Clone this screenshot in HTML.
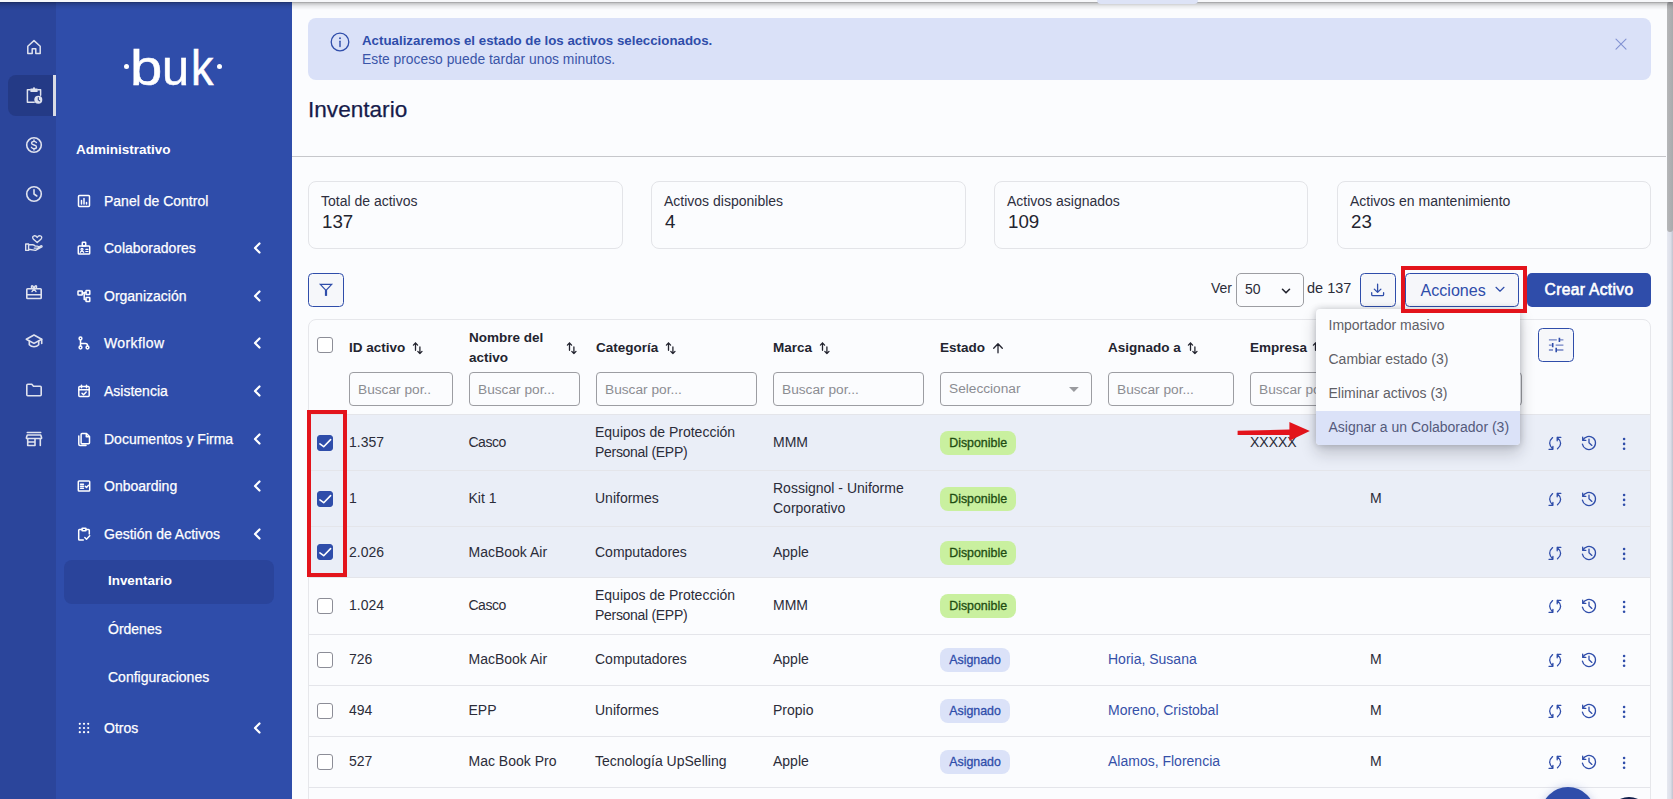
<!DOCTYPE html>
<html lang="es">
<head>
<meta charset="utf-8">
<title>Inventario</title>
<style>
*{box-sizing:border-box;margin:0;padding:0}
html,body{width:1673px;height:799px;overflow:hidden;background:#fbfcfe;font-family:"Liberation Sans",sans-serif;color:#2e2f3e;font-size:14px}
#app{position:relative;width:1673px;height:799px;overflow:hidden;background:#fbfcfe}
#app div,#app span{position:absolute;white-space:nowrap}
#rail{left:0;top:0;width:56px;height:799px;background:#2b459b}
#side{left:56px;top:0;width:236px;height:799px;background:#2f4daa}
#topline{left:0;top:0;width:1673px;height:11px;background:linear-gradient(#f7f8fa 0,#f7f8fa 1.800px,rgba(0,0,0,.36) 2.200px,rgba(0,0,0,.2) 3.500px,rgba(0,0,0,.08) 6px,rgba(0,0,0,0) 10px);z-index:50}
#toptab{left:1096.500px;top:0;width:101.500px;height:3.800px;background:#dde3f6;border-radius:0 0 5px 5px;z-index:51}
.railact{left:8px;top:75px;width:48px;height:41px;background:#243a86;border-radius:8px 0 0 8px}
.railbar{left:53px;top:75px;width:3px;height:41px;background:#d9dce6}
.ri{left:24px;width:20px;height:20px}
.ri svg{display:block;width:20px;height:20px;fill:none;stroke:#dfe2ee;stroke-width:1.6;stroke-linecap:round;stroke-linejoin:round}
.logo{left:56px;top:30px;width:236px;height:70px;color:#fff}
.logo .lt{top:2.500px;font-size:50.500px;line-height:70px;-webkit-text-stroke:0.500px #fff}
.logo .lt b{display:inline-block;font-weight:400;transform-origin:0 50%}
.logo .dot{top:33.600px;width:5.600px;height:5.600px;border-radius:50%;background:#fff}
.sect{left:76px;top:142px;color:#fff;font-weight:700;font-size:13.5px;line-height:16px}
.mi{left:104px;color:#fff;font-size:14px;line-height:18px;-webkit-text-stroke:0.250px #fff}
.mic{left:76px;width:16px;height:16px}
.mic svg{display:block;width:16px;height:16px;fill:none;stroke:#fff;stroke-width:1.5;stroke-linecap:round;stroke-linejoin:round}
.chev{left:252px;width:10px;height:14px}
.chev svg{display:block;width:10px;height:14px;fill:none;stroke:#fff;stroke-width:2.2;stroke-linecap:round;stroke-linejoin:round}
.subact{left:64px;top:560px;width:210px;height:44px;background:#2a449b;border-radius:8px}
.smi{left:108px;color:#fff;font-size:14px;line-height:18px;-webkit-text-stroke:0.250px #fff}
/* main */
.alert{left:308px;top:18px;width:1343px;height:62px;background:#dae1f8;border-radius:8px}
.alert .t1{left:54px;top:14px;font-size:13.3px;line-height:18px;font-weight:700;color:#2f4daa}
.alert .t2{left:54px;top:32px;font-size:13.85px;line-height:18px;color:#3a55a8}
h1.title{position:absolute;left:308px;-webkit-text-stroke:0.250px #171c4b;top:97px;font-size:22.6px;line-height:26px;font-weight:400;color:#171c4b;white-space:nowrap}
.hr{left:292px;top:156px;width:1374px;height:1px;background:#c6c7cb}
.card{top:181px;width:315px;height:68px;border:1px solid #e3e4e8;border-radius:8px;background:#fbfcfe}
.card .l{left:12px;top:10px;font-size:14px;line-height:18px;color:#2e2f3e}
.card .v{left:13px;top:29px;font-size:18.7px;line-height:22px;color:#23242f}
.btn{border:1px solid #2f4daa;border-radius:4.500px;background:#f6f7fa;color:#2f4daa}
.sel{border:1px solid #9c9da2;border-radius:5px;background:#fbfcfe}
.tbl{left:308px;top:319px;width:1343px;height:520px;border:1px solid #e6e7eb;border-radius:8px;background:#fbfcfe}
.th{font-weight:700;font-size:13.5px;line-height:20px;margin-top:1px;color:#23242f}
.inp{height:34px;top:372px;border:1px solid #9c9da2;border-radius:4px;background:#fbfcfe;color:#8b8c92;font-size:14px;line-height:33px;padding-left:8px;font-size:13.7px;overflow:hidden}
.row{left:309px;width:1341px;border-top:1px solid #e4e5ea}
.row.selr{background:#eaeef7}
.c{font-size:14px;line-height:20px;color:#2b2c39}
.c.wrap{white-space:normal!important}
.lnk{color:#3550a8}
.cb{left:317px;width:16px;height:16px;border:1px solid #8c8d97;border-radius:3px;background:#fff}
.cb.on{background:#2f4daa;border-color:#2f4daa}
.cb svg{display:block;position:absolute;left:-1px;top:-1px;width:16px;height:16px;fill:none;stroke:#fff;stroke-width:1.6;stroke-linecap:round;stroke-linejoin:round}
.badge{height:24px;border-radius:8px;font-size:12.4px;line-height:24px;padding:0 9.200px;font-weight:400;-webkit-text-stroke:0.300px currentColor}
.badge.g{background:#c9f09f;color:#1f4d12}
.badge.b{background:#dbe2f8;color:#2f4daa}
.ai{width:18px;height:18px}
.ai svg{display:block;width:18px;height:18px;fill:none;stroke:#2f4daa;stroke-width:1.300;stroke-linecap:round;stroke-linejoin:round}
.menu{left:1316px;top:309px;width:204px;height:136.300px;background:#fbfcfe;border-radius:4px;box-shadow:0 8px 16px rgba(20,22,35,.2),0 0 7px rgba(20,22,35,.22);z-index:20}
.menu .it{left:0;width:204px;height:34px;padding-left:12.500px;font-size:14px;line-height:33px;color:#5f6067}
.menu .it.hl{background:#dbe2f8;color:#545a7c;border-radius:0 0 4px 4px}
.redbox{border:4px solid #e3141c;z-index:30}
.sb{left:1667px;top:0;width:6px;height:799px;background:linear-gradient(90deg,#e6e8f0 0%,#dcdfe9 60%,#c0c3ce 100%);z-index:40}
.sbt{left:1667px;top:2px;width:6px;height:229.500px;background:linear-gradient(90deg,#b6b7b9,#a9aaac);border-radius:3px;z-index:41}
</style>
</head>
<body>
<div id="app">

  <div id="rail"></div>
  <div id="side"></div>
  <div class="railact"></div><div class="railbar"></div>
  <div class="ri" style="top:37px"><svg viewBox="0 0 20 20"><path d="M3.800 9.200 10 3.600l6.200 5.600V16.400h-4.400v-4.700H8.200v4.700H3.800z" stroke-width="1.500"/></svg></div>
<div class="ri" style="top:86px"><svg viewBox="0 0 20 20"><path d="M6.200 3.800H3.400V16.200H10.200M13.800 3.800H16.600V9.300" stroke-width="1.500"/><rect x="6.300" y="2.500" width="7.400" height="3.400" rx="0.600" fill="#dfe2ee" stroke="none"/><circle cx="10" cy="2.300" r="1.100" fill="#dfe2ee" stroke="none"/><circle cx="14.300" cy="13.700" r="4" fill="#dfe2ee" stroke="none"/><path d="M14.300 11.600v2.300l1.400 1" stroke="#243a86" stroke-width="1.100"/></svg></div>
<div class="ri" style="top:135px"><svg viewBox="0 0 20 20"><circle cx="10" cy="10" r="7.3"/><path d="M12.4 7.6c-.4-.8-1.3-1.2-2.4-1.2-1.4 0-2.4.7-2.4 1.8 0 2.5 4.9 1.1 4.9 3.7 0 1.100-1.1 1.800-2.500 1.800-1.200 0-2.200-.5-2.600-1.400M10 5v1.400M10 13.700V15" stroke-width="1.4"/></svg></div>
<div class="ri" style="top:184px"><svg viewBox="0 0 20 20"><circle cx="10" cy="10" r="7.3"/><path d="M10 5.800V10l2.800 2"/></svg></div>
<div class="ri" style="top:233px"><svg viewBox="0 0 20 20"><path d="M13.200 9.600 9.500 6.200C8.200 4.900 8.500 3.200 9.900 2.900 11.100 2.600 12.400 3.100 13.200 4.500 14 3.100 15.300 2.600 16.500 2.900 17.900 3.200 18.200 4.900 16.900 6.200z" stroke-width="1.400"/><path d="M1.700 11h2.900v6.400H1.700zM4.600 11.800H8.600c.8 0 1.500.3 2 .8l.5.500h2.300c.7 0 1.100.4 1.100 1s-.4 1-1.100 1H10.200M14.400 14.300l2.500-1.500c.8-.4 1.500.5.900 1.200L11.500 17.400 4.600 16.200" stroke-width="1.400"/></svg></div>
<div class="ri" style="top:282px"><svg viewBox="0 0 20 20"><rect x="2.800" y="6.800" width="14.400" height="9.700" rx="0.800"/><path d="M2.800 12.800h14.400M10 6.700C8.300 6.700 6.900 5.400 7.500 4.200 8.100 3.100 9.600 4.300 10 6.700 10.400 4.300 11.900 3.100 12.500 4.200 13.100 5.400 11.700 6.700 10 6.700zM10 6.900 8 9.600M10 6.900l2 2.700" stroke-width="1.400"/></svg></div>
<div class="ri" style="top:331px"><svg viewBox="0 0 20 20"><path d="M10 4 2.300 8.200 10 12.400l7.700-4.200z"/><path d="M5.300 10v3.700c1.200 1.300 2.900 2 4.700 2s3.500-.7 4.700-2V10M17.700 8.200v4.300"/></svg></div>
<div class="ri" style="top:380px"><svg viewBox="0 0 20 20"><path d="M2.800 5.300c0-.6.400-1 1-1h4l1.700 1.900h6.700c.6 0 1 .4 1 1v7.500c0 .6-.4 1-1 1H3.800c-.6 0-1-.4-1-1z"/></svg></div>
<div class="ri" style="top:429px"><svg viewBox="0 0 20 20"><path d="M3.300 3.500h13.400M2.500 8.300l.8-2.300h13.400l.8 2.300v1.200h-15zM3.700 9.500V16.500h7.300V9.500M11 13H3.700M16.300 9.500v7" /></svg></div>
  <div class="logo"><div class="dot" style="left:67.700px"></div><div class="lt" style="left:73.770px"><b style="transform:scaleX(1.150)">b</b><b style="transform:scaleX(0.966);margin-left:4.530px">u</b><b style="transform:scaleX(0.890);margin-left:0.800px">k</b></div><div class="dot" style="left:160.700px"></div></div>
  <div class="sect">Administrativo</div>
  <div class="mic" style="top:193px"><svg viewBox="0 0 16 16"><rect x="2.500" y="2.500" width="11" height="11" rx="1"/><path d="M5.500 11V7.500M8 11V5.500M10.500 11V9.500" stroke-width="1.500"/></svg></div>
<div class="mi" style="top:192px">Panel de Control</div>
<div class="mic" style="top:240px"><svg viewBox="0 0 16 16"><rect x="2.300" y="6" width="11.400" height="8" rx="0.800"/><rect x="6.300" y="2.300" width="3.400" height="3.700" rx="0.500"/><circle cx="6" cy="9.300" r="1" stroke-width="1.200"/><path d="M4.300 12.300c.3-.8 1-1.200 1.700-1.200s1.400.4 1.700 1.200M9.800 9.300h2.200M9.800 11.500h2.200" stroke-width="1.200"/></svg></div>
<div class="mi" style="top:239px">Colaboradores</div>
<div class="chev" style="top:241px"><svg viewBox="0 0 10 14"><path d="M7.500 2.500 3 7l4.500 4.500"/></svg></div>
<div class="mic" style="top:288px"><svg viewBox="0 0 16 16"><rect x="2" y="3" width="4.300" height="4" rx="0.500"/><rect x="10" y="2.600" width="3.800" height="3.800" rx="0.500"/><rect x="10" y="9.600" width="3.800" height="3.800" rx="0.500"/><path d="M6.300 5h1.900M8.200 4.500h1.800M8.200 4.500v7h1.800"/></svg></div>
<div class="mi" style="top:287px">Organización</div>
<div class="chev" style="top:289px"><svg viewBox="0 0 10 14"><path d="M7.500 2.500 3 7l4.500 4.500"/></svg></div>
<div class="mic" style="top:335px"><svg viewBox="0 0 16 16"><circle cx="4.500" cy="3.500" r="1.400"/><circle cx="4.500" cy="12.500" r="1.400"/><circle cx="11.500" cy="12.500" r="1.400"/><path d="M4.500 5v6M4.500 8.500h5c1.100 0 2 .9 2 2v.5"/></svg></div>
<div class="mi" style="top:334px;letter-spacing:0.400px">Workflow</div>
<div class="chev" style="top:336px"><svg viewBox="0 0 10 14"><path d="M7.500 2.500 3 7l4.500 4.500"/></svg></div>
<div class="mic" style="top:383px"><svg viewBox="0 0 16 16"><rect x="2.800" y="3.600" width="10.400" height="10" rx="1"/><path d="M2.800 6.700h10.400M5.500 2.300v2.400M10.500 2.300v2.400M6 10.300l1.500 1.500 2.700-2.800"/></svg></div>
<div class="mi" style="top:382px">Asistencia</div>
<div class="chev" style="top:384px"><svg viewBox="0 0 10 14"><path d="M7.500 2.500 3 7l4.500 4.500"/></svg></div>
<div class="mic" style="top:431px"><svg viewBox="0 0 16 16"><path d="M6 2.500h4.500l3 3v6.300c0 .5-.4.900-.9.900H6c-.5 0-.9-.4-.9-.9V3.400c0-.5.400-.9.900-.9zM10.300 2.700v3h3M2.800 5v8.300c0 .7.500 1.200 1.200 1.200h6"/></svg></div>
<div class="mi" style="top:430px">Documentos y Firma</div>
<div class="chev" style="top:432px"><svg viewBox="0 0 10 14"><path d="M7.500 2.500 3 7l4.500 4.500"/></svg></div>
<div class="mic" style="top:478px"><svg viewBox="0 0 16 16"><rect x="2.300" y="3" width="11.400" height="10" rx="0.800"/><path d="M4.500 6.300h3M4.500 8.300h3M4.500 10.300h3M9.300 8.300l1.200 1.200 2-2.300" stroke-width="1.400"/></svg></div>
<div class="mi" style="top:477px">Onboarding</div>
<div class="chev" style="top:479px"><svg viewBox="0 0 10 14"><path d="M7.500 2.500 3 7l4.500 4.500"/></svg></div>
<div class="mic" style="top:526px"><svg viewBox="0 0 16 16"><path d="M6 3.500H3.500c-.5 0-.8.300-.8.800v8.900c0 .5.300.8.800.8h3.800M10 3.500h2.500c.5 0 .8.300.8.800V8"/><rect x="6" y="2.300" width="4" height="2.400" rx="0.500"/><path d="M8.800 11.500l1.700 1.700 3.200-3.500"/></svg></div>
<div class="mi" style="top:525px">Gestión de Activos</div>
<div class="chev" style="top:527px"><svg viewBox="0 0 10 14"><path d="M7.500 2.500 3 7l4.500 4.500"/></svg></div>
<div class="mic" style="top:720px"><svg viewBox="0 0 16 16"><circle cx="3.8" cy="3.8" r="1.100" fill="#fff" stroke="none"/><circle cx="3.8" cy="8" r="1.100" fill="#fff" stroke="none"/><circle cx="3.8" cy="12.2" r="1.100" fill="#fff" stroke="none"/><circle cx="8" cy="3.8" r="1.100" fill="#fff" stroke="none"/><circle cx="8" cy="8" r="1.100" fill="#fff" stroke="none"/><circle cx="8" cy="12.2" r="1.100" fill="#fff" stroke="none"/><circle cx="12.2" cy="3.8" r="1.100" fill="#fff" stroke="none"/><circle cx="12.2" cy="8" r="1.100" fill="#fff" stroke="none"/><circle cx="12.2" cy="12.2" r="1.100" fill="#fff" stroke="none"/></svg></div>
<div class="mi" style="top:719px">Otros</div>
<div class="chev" style="top:721px"><svg viewBox="0 0 10 14"><path d="M7.500 2.500 3 7l4.500 4.500"/></svg></div>
<div class="subact"></div>
<div class="smi" style="top:572px;font-weight:700;font-size:13.400px;-webkit-text-stroke:0">Inventario</div>
<div class="smi" style="top:620px">Órdenes</div>
<div class="smi" style="top:668px">Configuraciones</div>

<div class="alert"><div style="left:22px;top:13.800px;width:20px;height:20px"><svg viewBox="0 0 20 20" style="display:block;width:20px;height:20px;fill:none;stroke:#2f4daa;stroke-width:1.300;stroke-linecap:round"><circle cx="10" cy="10" r="8.800"/><path d="M10 9.300v5.200" stroke-width="1.400"/><circle cx="10" cy="6.200" r="0.950" fill="#2f4daa" stroke="none"/></svg></div><div class="t1">Actualizaremos el estado de los activos seleccionados.</div><div class="t2">Este proceso puede tardar unos minutos.</div><div style="left:1307px;top:20px;width:12px;height:12px"><svg viewBox="0 0 12 12" style="display:block;width:12px;height:12px;fill:none;stroke:#8292d2;stroke-width:1.100;stroke-linecap:round"><path d="M1 1.100l10 10M11 1.100 1 11.100"/></svg></div></div>
<h1 class="title">Inventario</h1>
<div class="hr"></div>
<div class="card" style="left:308px;width:315px"><div class="l">Total de activos</div><div class="v">137</div></div>
<div class="card" style="left:651px;width:315px"><div class="l">Activos disponibles</div><div class="v">4</div></div>
<div class="card" style="left:994px;width:314px"><div class="l">Activos asignados</div><div class="v">109</div></div>
<div class="card" style="left:1337px;width:314px"><div class="l">Activos en mantenimiento</div><div class="v">23</div></div>
<div class="btn" style="left:308px;top:273px;width:36px;height:34px"><svg viewBox="0 0 36 34" style="position:absolute;left:-1px;top:-1px;width:36px;height:34px;fill:none;stroke:#2f4daa;stroke-width:1.200;stroke-linejoin:miter"><path d="M12.300 11.300H23.700L18 17.400z"/><path d="M18 17V22.900" stroke-width="2.200"/></svg></div>
<div class="c" style="left:1211px;top:278px">Ver</div>
<div class="sel" style="left:1236px;top:273px;width:68px;height:34px"><div class="c" style="left:8px;top:5px">50</div><svg viewBox="0 0 10 10" style="position:absolute;left:44px;top:12px;width:10px;height:10px;fill:none;stroke:#23242f;stroke-width:1.600;stroke-linecap:round;stroke-linejoin:round"><path d="M1.500 3.300 5 6.800l3.500-3.500"/></svg></div>
<div class="c" style="left:1307px;top:278px;font-size:14.500px">de 137</div>
<div class="btn" style="left:1360px;top:273px;width:36px;height:34px"><svg viewBox="0 0 36 34" style="position:absolute;left:-1px;top:-1px;width:36px;height:34px;fill:none;stroke:#2f4daa;stroke-width:1.300;stroke-linejoin:round;stroke-linecap:round"><path d="M17.600 11.200V19.300M14.300 16.100 17.600 19.400 20.900 16.100M11.700 19.700V21.400Q11.700 22.600 12.900 22.600H22.400Q23.600 22.600 23.600 21.400V19.700"/></svg></div>
<div class="btn" style="left:1404.500px;top:273px;width:114.500px;height:34px"><div style="left:15px;top:6px;font-size:16.100px;line-height:20px;color:#2f4daa">Acciones</div><svg viewBox="0 0 10 10" style="position:absolute;left:89px;top:10px;width:10px;height:10px;fill:none;stroke:#2f4daa;stroke-width:1.200;stroke-linecap:round;stroke-linejoin:round"><path d="M1 3.300 5 7.200l4-3.900"/></svg></div>
<div style="left:1527px;top:273px;width:124px;height:34px;background:#2f4daa;border-radius:5px;color:#fff;font-weight:400;font-size:15.600px;letter-spacing:0.320px;-webkit-text-stroke:0.600px #fff;line-height:34px;text-align:center">Crear Activo</div>
<div class="redbox" style="left:1400.500px;top:266px;width:126.500px;height:46.500px"></div>
<div class="tbl"></div>
<div class="cb" style="top:337px"></div>
<div class="th" style="left:349px;top:337px" id="th349">ID activo<span style="position:relative;display:inline-block;vertical-align:-3px;margin-left:6.5px"><svg viewBox="0 0 12 14" style="display:block;width:12px;height:14px;fill:none;stroke:#23242f;stroke-width:1.300;stroke-linecap:round;stroke-linejoin:round"><path d="M3.500 9.300V1.900M1.400 4.100 3.500 1.900l2.100 2.200M7.900 5.900V12.600M5.800 10.400l2.100 2.200 2.100-2.200"/></svg></span></div>
<div class="th" style="left:469px;top:327px" id="th469">Nombre del<br>activo</div>
<div style="left:566px;top:341px"><svg viewBox="0 0 12 14" style="display:block;width:12px;height:14px;fill:none;stroke:#23242f;stroke-width:1.300;stroke-linecap:round;stroke-linejoin:round"><path d="M3.500 9.300V1.900M1.400 4.100 3.500 1.900l2.100 2.200M7.900 5.900V12.600M5.800 10.400l2.100 2.200 2.100-2.200"/></svg></div>
<div class="th" style="left:596px;top:337px" id="th596">Categoría<span style="position:relative;display:inline-block;vertical-align:-3px;margin-left:6.5px"><svg viewBox="0 0 12 14" style="display:block;width:12px;height:14px;fill:none;stroke:#23242f;stroke-width:1.300;stroke-linecap:round;stroke-linejoin:round"><path d="M3.500 9.300V1.900M1.400 4.100 3.500 1.900l2.100 2.200M7.900 5.900V12.600M5.800 10.400l2.100 2.200 2.100-2.200"/></svg></span></div>
<div class="th" style="left:773px;top:337px" id="th773">Marca<span style="position:relative;display:inline-block;vertical-align:-3px;margin-left:6.5px"><svg viewBox="0 0 12 14" style="display:block;width:12px;height:14px;fill:none;stroke:#23242f;stroke-width:1.300;stroke-linecap:round;stroke-linejoin:round"><path d="M3.500 9.300V1.900M1.400 4.100 3.500 1.900l2.100 2.200M7.900 5.900V12.600M5.800 10.400l2.100 2.200 2.100-2.200"/></svg></span></div>
<div class="th" style="left:940px;top:337px" id="th940">Estado<span style="position:relative;display:inline-block;vertical-align:-3px;margin-left:6.5px"><svg viewBox="0 0 12 14" style="display:block;width:12px;height:14px;fill:none;stroke:#23242f;stroke-width:1.300;stroke-linecap:round;stroke-linejoin:round"><path d="M6 11.800V2.800M1.700 7.300 6 2.800l4.300 4.500"/></svg></span></div>
<div class="th" style="left:1108px;top:337px" id="th1108">Asignado a<span style="position:relative;display:inline-block;vertical-align:-3px;margin-left:6.5px"><svg viewBox="0 0 12 14" style="display:block;width:12px;height:14px;fill:none;stroke:#23242f;stroke-width:1.300;stroke-linecap:round;stroke-linejoin:round"><path d="M3.500 9.300V1.900M1.400 4.100 3.500 1.900l2.100 2.200M7.900 5.900V12.600M5.800 10.400l2.100 2.200 2.100-2.200"/></svg></span></div>
<div class="th" style="left:1250px;top:337px" id="th1250">Empresa<span style="position:relative;display:inline-block;vertical-align:-3px;margin-left:4.5px"><svg viewBox="0 0 12 14" style="display:block;width:12px;height:14px;fill:none;stroke:#23242f;stroke-width:1.300;stroke-linecap:round;stroke-linejoin:round"><path d="M3.500 9.300V1.900M1.400 4.100 3.500 1.900l2.100 2.200M7.900 5.900V12.600M5.800 10.400l2.100 2.200 2.100-2.200"/></svg></span></div>
<div class="inp" style="left:349px;width:104px">Buscar por..</div>
<div class="inp" style="left:469px;width:111px">Buscar por...</div>
<div class="inp" style="left:596px;width:161px">Buscar por...</div>
<div class="inp" style="left:773px;width:151px">Buscar por...</div>
<div class="inp" style="left:1108px;width:126px">Buscar por...</div>
<div class="inp" style="left:1250px;width:272px">Buscar por...</div>
<div class="inp" style="left:940px;width:152px;line-height:31px">Seleccionar<svg viewBox="0 0 10 6" style="position:absolute;left:128px;top:14px;width:10px;height:6px;fill:#9a9b9f"><path d="M0 0h9.800L4.900 4.900z"/></svg></div>
<div class="btn" style="left:1538px;top:328px;width:36px;height:34px;background:#f6f7fa"><svg viewBox="0 0 16 16" style="position:absolute;left:9px;top:8px;width:16px;height:16px;fill:none;stroke-width:1.400;stroke-linecap:butt"><path stroke="#7283c4" d="M0.900 2.900H8.800M11.400 2.900H15.400M0.900 8.100H3.700M7.700 8.100H15.400M0.900 13H5M8.200 13H15.400"/><path stroke="#2f4daa" stroke-width="1.600" d="M11.400 0.700V5.100M4.700 5.900V10.300M8.200 10.800V15.200"/></svg></div>
<div class="row selr" style="top:414px;height:56px"></div>
<div class="cb on" style="top:435px"><svg viewBox="0 0 16 16"><path d="M2.900 8.900 6.700 11.700 13.600 4.600"/></svg></div>
<div class="c" style="left:349px;top:432px">1.357</div>
<div class="c" style="left:468.5px;top:432px"><span style="position:static;letter-spacing:-0.500px">Casco</span></div>
<div class="c" style="left:595px;top:422px">Equipos de Protección<br><span style="position:static;letter-spacing:-0.300px">Personal (EPP)</span></div>
<div class="c" style="left:773px;top:432px">MMM</div>
<div class="badge g" style="left:940px;top:431px">Disponible</div>
<div class="c" style="left:1250px;top:432px">XXXXX</div>
<div class="ai" style="left:1546px;top:434.0px"><svg viewBox="0 0 18 18"><path d="M6.600 3.600Q0.600 9.200 6.900 15.300M3 15.300H6.900V12.300M11.500 14.800Q17.900 9.200 11.200 3.400M14.800 3.400H11.200V6.800"/></svg></div>
<div class="ai" style="left:1580px;top:434.0px"><svg viewBox="0 0 18 18"><path d="M2.400 10.200A6.600 6.600 0 1 0 2.800 6.400M2.700 3.100V6.400H5.800M9 5.100V8.800L11.900 11.400"/></svg></div>
<div class="ai" style="left:1615px;top:434.0px"><svg viewBox="0 0 18 18"><circle cx="9.100" cy="5" r="1.300" fill="#2f4daa" stroke="none"/><circle cx="9.100" cy="9.900" r="1.300" fill="#2f4daa" stroke="none"/><circle cx="9.100" cy="14.800" r="1.300" fill="#2f4daa" stroke="none"/></svg></div>
<div class="row selr" style="top:470px;height:56px"></div>
<div class="cb on" style="top:491px"><svg viewBox="0 0 16 16"><path d="M2.900 8.900 6.700 11.700 13.600 4.600"/></svg></div>
<div class="c" style="left:349px;top:488px">1</div>
<div class="c" style="left:468.5px;top:488px">Kit 1</div>
<div class="c" style="left:595px;top:488px">Uniformes</div>
<div class="c" style="left:773px;top:478px">Rossignol - Uniforme<br>Corporativo</div>
<div class="badge g" style="left:940px;top:487px">Disponible</div>
<div class="c" style="left:1370px;top:488px">M</div>
<div class="ai" style="left:1546px;top:490.0px"><svg viewBox="0 0 18 18"><path d="M6.600 3.600Q0.600 9.200 6.900 15.300M3 15.300H6.900V12.300M11.500 14.800Q17.900 9.200 11.200 3.400M14.800 3.400H11.200V6.800"/></svg></div>
<div class="ai" style="left:1580px;top:490.0px"><svg viewBox="0 0 18 18"><path d="M2.400 10.200A6.600 6.600 0 1 0 2.800 6.400M2.700 3.100V6.400H5.800M9 5.100V8.800L11.900 11.400"/></svg></div>
<div class="ai" style="left:1615px;top:490.0px"><svg viewBox="0 0 18 18"><circle cx="9.100" cy="5" r="1.300" fill="#2f4daa" stroke="none"/><circle cx="9.100" cy="9.900" r="1.300" fill="#2f4daa" stroke="none"/><circle cx="9.100" cy="14.800" r="1.300" fill="#2f4daa" stroke="none"/></svg></div>
<div class="row selr" style="top:526px;height:51px"></div>
<div class="cb on" style="top:544px"><svg viewBox="0 0 16 16"><path d="M2.900 8.900 6.700 11.700 13.600 4.600"/></svg></div>
<div class="c" style="left:349px;top:542px">2.026</div>
<div class="c" style="left:468.5px;top:542px">MacBook Air</div>
<div class="c" style="left:595px;top:542px">Computadores</div>
<div class="c" style="left:773px;top:542px">Apple</div>
<div class="badge g" style="left:940px;top:541px">Disponible</div>
<div class="ai" style="left:1546px;top:543.5px"><svg viewBox="0 0 18 18"><path d="M6.600 3.600Q0.600 9.200 6.900 15.300M3 15.300H6.900V12.300M11.500 14.800Q17.900 9.200 11.200 3.400M14.800 3.400H11.200V6.800"/></svg></div>
<div class="ai" style="left:1580px;top:543.5px"><svg viewBox="0 0 18 18"><path d="M2.400 10.200A6.600 6.600 0 1 0 2.800 6.400M2.700 3.100V6.400H5.800M9 5.100V8.800L11.900 11.400"/></svg></div>
<div class="ai" style="left:1615px;top:543.5px"><svg viewBox="0 0 18 18"><circle cx="9.100" cy="5" r="1.300" fill="#2f4daa" stroke="none"/><circle cx="9.100" cy="9.900" r="1.300" fill="#2f4daa" stroke="none"/><circle cx="9.100" cy="14.800" r="1.300" fill="#2f4daa" stroke="none"/></svg></div>
<div class="row" style="top:577px;height:57px"></div>
<div class="cb" style="top:598px"></div>
<div class="c" style="left:349px;top:595px">1.024</div>
<div class="c" style="left:468.5px;top:595px"><span style="position:static;letter-spacing:-0.500px">Casco</span></div>
<div class="c" style="left:595px;top:585px">Equipos de Protección<br><span style="position:static;letter-spacing:-0.300px">Personal (EPP)</span></div>
<div class="c" style="left:773px;top:595px">MMM</div>
<div class="badge g" style="left:940px;top:594px">Disponible</div>
<div class="ai" style="left:1546px;top:596.5px"><svg viewBox="0 0 18 18"><path d="M6.600 3.600Q0.600 9.200 6.900 15.300M3 15.300H6.900V12.300M11.500 14.800Q17.900 9.200 11.200 3.400M14.800 3.400H11.200V6.800"/></svg></div>
<div class="ai" style="left:1580px;top:596.5px"><svg viewBox="0 0 18 18"><path d="M2.400 10.200A6.600 6.600 0 1 0 2.800 6.400M2.700 3.100V6.400H5.800M9 5.100V8.800L11.900 11.400"/></svg></div>
<div class="ai" style="left:1615px;top:596.5px"><svg viewBox="0 0 18 18"><circle cx="9.100" cy="5" r="1.300" fill="#2f4daa" stroke="none"/><circle cx="9.100" cy="9.900" r="1.300" fill="#2f4daa" stroke="none"/><circle cx="9.100" cy="14.800" r="1.300" fill="#2f4daa" stroke="none"/></svg></div>
<div class="row" style="top:634px;height:51px"></div>
<div class="cb" style="top:652px"></div>
<div class="c" style="left:349px;top:649px">726</div>
<div class="c" style="left:468.5px;top:649px">MacBook Air</div>
<div class="c" style="left:595px;top:649px">Computadores</div>
<div class="c" style="left:773px;top:649px">Apple</div>
<div class="badge b" style="left:940px;top:648px">Asignado</div>
<div class="c lnk" style="left:1108px;top:649px">Horia, Susana</div>
<div class="c" style="left:1370px;top:649px">M</div>
<div class="ai" style="left:1546px;top:650.5px"><svg viewBox="0 0 18 18"><path d="M6.600 3.600Q0.600 9.200 6.900 15.300M3 15.300H6.900V12.300M11.500 14.800Q17.900 9.200 11.200 3.400M14.800 3.400H11.200V6.800"/></svg></div>
<div class="ai" style="left:1580px;top:650.5px"><svg viewBox="0 0 18 18"><path d="M2.400 10.200A6.600 6.600 0 1 0 2.800 6.400M2.700 3.100V6.400H5.800M9 5.100V8.800L11.900 11.400"/></svg></div>
<div class="ai" style="left:1615px;top:650.5px"><svg viewBox="0 0 18 18"><circle cx="9.100" cy="5" r="1.300" fill="#2f4daa" stroke="none"/><circle cx="9.100" cy="9.900" r="1.300" fill="#2f4daa" stroke="none"/><circle cx="9.100" cy="14.800" r="1.300" fill="#2f4daa" stroke="none"/></svg></div>
<div class="row" style="top:685px;height:51px"></div>
<div class="cb" style="top:703px"></div>
<div class="c" style="left:349px;top:700px">494</div>
<div class="c" style="left:468.5px;top:700px">EPP</div>
<div class="c" style="left:595px;top:700px">Uniformes</div>
<div class="c" style="left:773px;top:700px">Propio</div>
<div class="badge b" style="left:940px;top:699px">Asignado</div>
<div class="c lnk" style="left:1108px;top:700px">Moreno, Cristobal</div>
<div class="c" style="left:1370px;top:700px">M</div>
<div class="ai" style="left:1546px;top:701.5px"><svg viewBox="0 0 18 18"><path d="M6.600 3.600Q0.600 9.200 6.900 15.300M3 15.300H6.900V12.300M11.500 14.800Q17.900 9.200 11.200 3.400M14.800 3.400H11.200V6.800"/></svg></div>
<div class="ai" style="left:1580px;top:701.5px"><svg viewBox="0 0 18 18"><path d="M2.400 10.200A6.600 6.600 0 1 0 2.800 6.400M2.700 3.100V6.400H5.800M9 5.100V8.800L11.900 11.400"/></svg></div>
<div class="ai" style="left:1615px;top:701.5px"><svg viewBox="0 0 18 18"><circle cx="9.100" cy="5" r="1.300" fill="#2f4daa" stroke="none"/><circle cx="9.100" cy="9.900" r="1.300" fill="#2f4daa" stroke="none"/><circle cx="9.100" cy="14.800" r="1.300" fill="#2f4daa" stroke="none"/></svg></div>
<div class="row" style="top:736px;height:51px"></div>
<div class="cb" style="top:754px"></div>
<div class="c" style="left:349px;top:751px">527</div>
<div class="c" style="left:468.5px;top:751px">Mac Book Pro</div>
<div class="c" style="left:595px;top:751px">Tecnología UpSelling</div>
<div class="c" style="left:773px;top:751px">Apple</div>
<div class="badge b" style="left:940px;top:750px">Asignado</div>
<div class="c lnk" style="left:1108px;top:751px">Alamos, Florencia</div>
<div class="c" style="left:1370px;top:751px">M</div>
<div class="ai" style="left:1546px;top:752.5px"><svg viewBox="0 0 18 18"><path d="M6.600 3.600Q0.600 9.200 6.900 15.300M3 15.300H6.900V12.300M11.500 14.800Q17.900 9.200 11.200 3.400M14.800 3.400H11.200V6.800"/></svg></div>
<div class="ai" style="left:1580px;top:752.5px"><svg viewBox="0 0 18 18"><path d="M2.400 10.200A6.600 6.600 0 1 0 2.800 6.400M2.700 3.100V6.400H5.800M9 5.100V8.800L11.900 11.400"/></svg></div>
<div class="ai" style="left:1615px;top:752.5px"><svg viewBox="0 0 18 18"><circle cx="9.100" cy="5" r="1.300" fill="#2f4daa" stroke="none"/><circle cx="9.100" cy="9.900" r="1.300" fill="#2f4daa" stroke="none"/><circle cx="9.100" cy="14.800" r="1.300" fill="#2f4daa" stroke="none"/></svg></div>
<div class="row" style="top:787px;height:56px"></div>
<div class="menu"><div class="it" style="top:0">Importador masivo</div><div class="it" style="top:34px">Cambiar estado (3)</div><div class="it" style="top:68px">Eliminar activos (3)</div><div class="it hl" style="top:102.300px;line-height:33px">Asignar a un Colaborador (3)</div></div>
<div class="redbox" style="left:306.500px;top:410px;width:40.500px;height:167px"></div>
<svg viewBox="0 0 74 24" style="position:absolute;left:1237px;top:420px;width:74px;height:24px;z-index:19"><path d="M0.600 10.700 52.400 9.500V2L72.800 11.100 52.400 20.700V15L0.600 15z" fill="#e3141c"/></svg>
<div style="left:1541px;top:787px;width:54px;height:54px;border-radius:50%;background:#2f4daa;box-shadow:0 0 8px rgba(47,77,170,.25);z-index:35"></div>
<div style="left:1607px;top:797px;width:44px;height:44px;border-radius:50%;background:#0f1d4a;z-index:35"></div>
<div class="sb"></div><div class="sbt"></div>
<div id="topline"></div><div id="toptab"></div>
</div>
</body>
</html>
